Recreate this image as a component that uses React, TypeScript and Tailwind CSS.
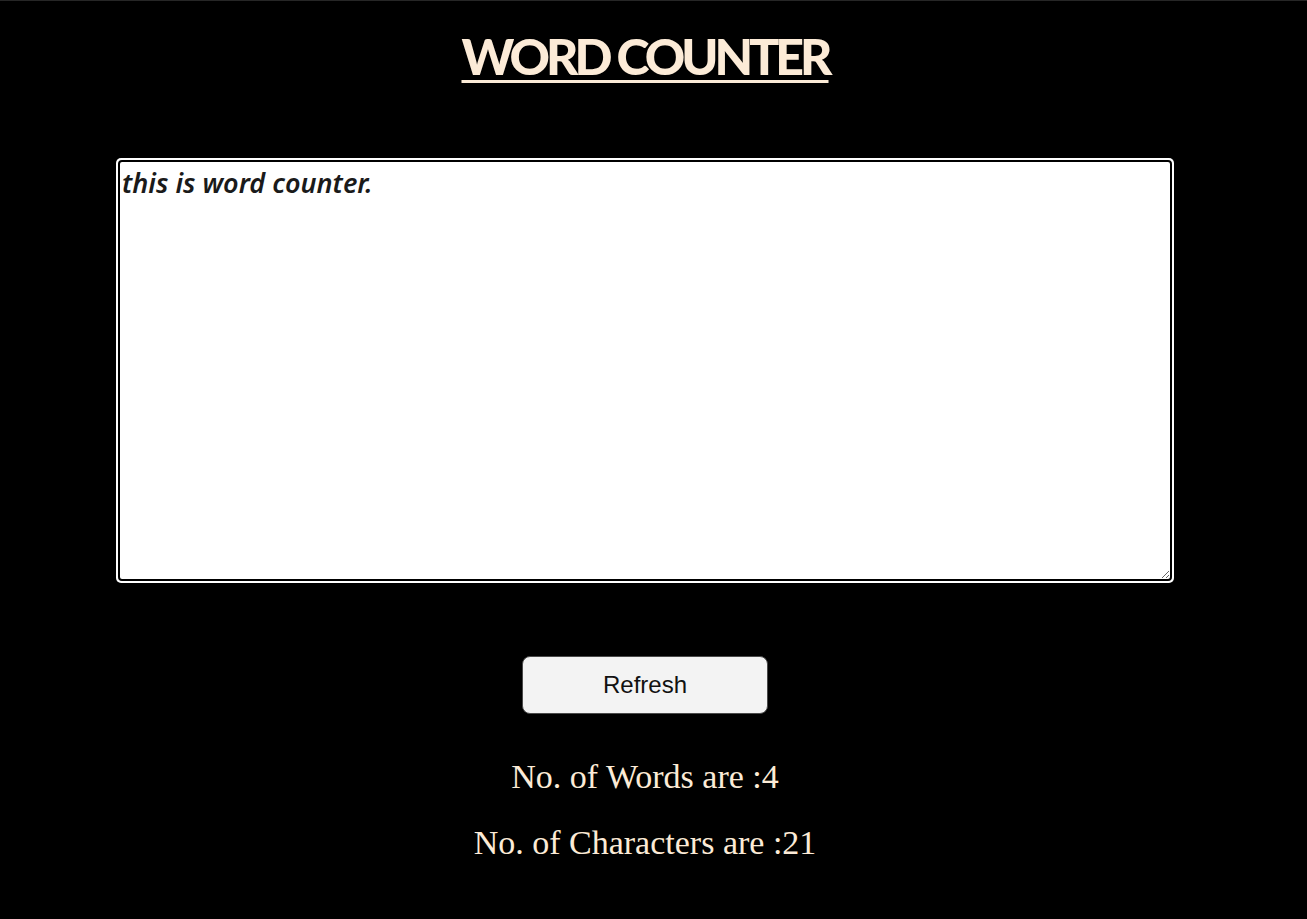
import { useState } from 'react';

function countWords(text: string) {
    return text.split(/\s+/).filter((w) => w.length > 0).length;
}

export default function App() {
    const [text, setText] = useState('this is word counter.');

    return (
        <div className="min-h-[919px] w-full border-t border-[#262626] bg-black pr-[17px] text-[#fcebd7]">
            <div className="flex flex-col items-center">
                <h1 className="mt-[22px] font-['Lato',sans-serif] text-[50px] font-black leading-[66px] tracking-[-0.08em] underline decoration-[3px] underline-offset-[5px]">
                    WORD COUNTER
                </h1>

                <div className="mt-[69px] rounded-[5px] bg-white p-[2px]">
                    <textarea
                        value={text}
                        onChange={(e) => setText(e.target.value)}
                        className="block h-[421px] w-[1054px] resize rounded-[4px] border-2 border-black bg-white px-[2px] py-[4px] font-['Noto_Sans',sans-serif] text-[27px] font-semibold italic leading-[34px] text-[#1a1a1a] outline-none"
                    />
                </div>

                <button
                    type="button"
                    onClick={() => setText('')}
                    className="mt-[73px] h-[58px] w-[246px] rounded-[8px] border-[1.5px] border-[#4a4a4a] bg-[#f3f3f3] font-['Liberation_Sans',Arial,sans-serif] text-[24px] text-[#111]"
                >
                    Refresh
                </button>

                <div className="mt-[44px] flex flex-col items-center gap-[28px] font-['Liberation_Serif','Times_New_Roman',serif] text-[34px] leading-[38px]">
                    <p>No. of Words are :{countWords(text)}</p>
                    <p>No. of Characters are :{text.length}</p>
                </div>
            </div>
        </div>
    );
}
